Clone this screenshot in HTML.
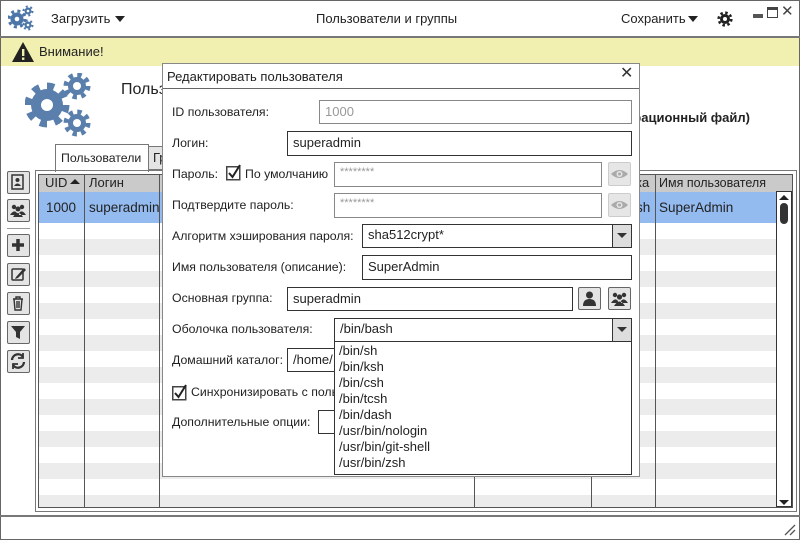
<!DOCTYPE html>
<html><head><meta charset="utf-8">
<style>
*{box-sizing:border-box;margin:0;padding:0}
body{width:800px;height:540px;position:relative;overflow:hidden;background:#fff;font-family:"Liberation Sans","DejaVu Sans",sans-serif;font-size:13px;color:#222}
.a{position:absolute}
.t{position:absolute;white-space:nowrap;line-height:16px}
.l{font-size:12.3px}
.in{position:absolute;border:1.5px solid #333;background:#fff;padding:3px 5px;line-height:16px;white-space:nowrap;overflow:hidden}
.gin{border-color:#888;color:#999}
.btn{position:absolute;width:23px;height:23px;border:1.5px solid #666;background:#e4e4e4;border-radius:2px}
.eye{position:absolute;width:23px;height:24px;border:1px solid #ccc;background:#e6e6e6;border-radius:2px}
.arr{position:absolute;right:0;top:0;bottom:0;width:19px;border-left:1.5px solid #333;background:#ddd}
.arr:after{content:"";position:absolute;left:4px;top:8px;border-left:5px solid transparent;border-right:5px solid transparent;border-top:5px solid #333}
.vl{position:absolute;top:0;width:1px;height:334px;background:#555}
</style></head><body>
<div class="a" style="left:0;top:0;width:800px;height:540px;border:1px solid #666"></div>
<svg class="a" style="left:8px;top:5px" width="26" height="26" viewBox="0 0 26 26">
<g fill="#4d76a8"><circle cx="9" cy="14" r="6.5"/><circle cx="9" cy="14" r="8" fill="none" stroke="#4d76a8" stroke-width="3" stroke-dasharray="3 3.3"/><circle cx="9" cy="14" r="2.3" fill="#fff"/>
<circle cx="20" cy="6" r="3.5"/><circle cx="20" cy="6" r="4.5" fill="none" stroke="#4d76a8" stroke-width="2" stroke-dasharray="2 2.7"/><circle cx="20" cy="6" r="1.3" fill="#fff"/>
<circle cx="20" cy="20" r="3.5"/><circle cx="20" cy="20" r="4.5" fill="none" stroke="#4d76a8" stroke-width="2" stroke-dasharray="2 2.7"/><circle cx="20" cy="20" r="1.3" fill="#fff"/></g></svg>
<div class="t" style="left:51px;top:11px">Загрузить</div>
<div class="a" style="left:115px;top:16px;border-left:5px solid transparent;border-right:5px solid transparent;border-top:6px solid #222"></div>
<div class="t" style="left:316px;top:11px">Пользователи и группы</div>
<div class="t" style="left:621px;top:11px">Сохранить</div>
<div class="a" style="left:688px;top:16px;border-left:5px solid transparent;border-right:5px solid transparent;border-top:6px solid #222"></div>
<svg class="a" style="left:717px;top:11px" width="16" height="16" viewBox="0 0 16 16"><circle cx="8" cy="8" r="5" fill="#222"/><circle cx="8" cy="8" r="6.3" fill="none" stroke="#222" stroke-width="2.6" stroke-dasharray="2.5 2.45"/><circle cx="8" cy="8" r="2" fill="#fff"/></svg>
<div class="a" style="left:753px;top:14px;width:10px;height:4px;background:#555"></div>
<div class="a" style="left:767px;top:7px;width:11px;height:11px;border:1.5px solid #444;border-top-width:3px"></div>
<div class="t" style="left:781px;top:4px;font-size:15px;color:#444">✕</div>
<div class="a" style="left:0;top:36px;width:800px;height:1.5px;background:#777"></div>
<div class="a" style="left:1px;top:38px;width:798px;height:28px;background:#f2f0b0"></div>
<svg class="a" style="left:11px;top:41px" width="24" height="22" viewBox="0 0 24 22"><path d="M12 1 L23 21 L1 21 Z" fill="#222"/><rect x="11" y="8" width="2.4" height="7" fill="#f2f0b0"/><rect x="11" y="16.5" width="2.4" height="2.4" fill="#f2f0b0"/></svg>
<div class="t" style="left:39px;top:44px">Внимание!</div>
<svg class="a" style="left:25px;top:73px" width="70" height="70" viewBox="0 0 70 70">
<g fill="#5a7fad"><circle cx="22" cy="32" r="16"/><circle cx="22" cy="32" r="19" fill="none" stroke="#5a7fad" stroke-width="7" stroke-dasharray="7.2 7.7"/><circle cx="22" cy="32" r="6" fill="#fff"/>
<circle cx="52" cy="13" r="9"/><circle cx="52" cy="13" r="11" fill="none" stroke="#5a7fad" stroke-width="5" stroke-dasharray="4.3 4.33"/><circle cx="52" cy="13" r="4" fill="#fff"/>
<circle cx="52" cy="50" r="9"/><circle cx="52" cy="50" r="11" fill="none" stroke="#5a7fad" stroke-width="5" stroke-dasharray="4.3 4.33"/><circle cx="52" cy="50" r="4" fill="#fff"/></g></svg>
<div class="t" style="left:121px;top:82px;font-size:16px">Пользователи и группы</div>
<div class="t" style="left:121px;top:110px;font-size:13px;font-weight:bold;width:629px;text-align:right">Настройка пользователей (конфигурационный файл)</div>
<div class="a" style="left:55px;top:144px;width:94px;height:28px;border:1px solid #777;border-bottom:none;background:#fff"></div>
<div class="t" style="left:61px;top:150px;font-size:12.3px">Пользователи</div>
<div class="a" style="left:148px;top:146px;width:20px;height:24px;border:1px solid #777;background:#e4e4e4"></div>
<div class="t" style="left:153px;top:150px">Гр</div>
<div class="btn" style="left:7px;top:171px"><svg width="20" height="20" viewBox="0 0 20 20"><rect x="4" y="3" width="11" height="14" fill="none" stroke="#333" stroke-width="1.5"/><circle cx="9.5" cy="8" r="2" fill="#333"/><path d="M6 14 Q9.5 9 13 14Z" fill="#333"/></svg></div>
<div class="btn" style="left:7px;top:199px"><svg width="20" height="20" viewBox="0 0 20 20" fill="#333"><circle cx="6" cy="7" r="2.2"/><circle cx="14" cy="7" r="2.2"/><circle cx="10" cy="9" r="2.5"/><path d="M2 15 Q6 9 9 13 L9 15Z M18 15 Q14 9 11 13 L11 15Z M5 17 Q10 9 15 17Z"/></svg></div>
<div class="a" style="left:7px;top:228px;width:23px;height:1px;background:#999"></div>
<div class="btn" style="left:7px;top:234px"><svg width="20" height="20" viewBox="0 0 20 20"><path d="M10 4v12M4 10h12" stroke="#333" stroke-width="3.5"/></svg></div>
<div class="btn" style="left:7px;top:263px"><svg width="20" height="20" viewBox="0 0 20 20"><rect x="4" y="5" width="11" height="11" rx="1" fill="none" stroke="#333" stroke-width="1.5"/><path d="M8 13 L16 4 L18 6 L10 14 L7 15Z" fill="#333"/></svg></div>
<div class="btn" style="left:7px;top:292px"><svg width="20" height="20" viewBox="0 0 20 20" fill="none" stroke="#333" stroke-width="1.4"><path d="M5 6h10M8 6V4h4v2M6 6l1 11h6l1-11M9 8v7M11 8v7"/></svg></div>
<div class="btn" style="left:7px;top:321px"><svg width="20" height="20" viewBox="0 0 20 20"><path d="M3 4h14l-5 6v7l-4-2v-5Z" fill="#333"/></svg></div>
<div class="btn" style="left:7px;top:350px"><svg width="20" height="20" viewBox="0 0 20 20" fill="none" stroke="#333" stroke-width="2.3"><path d="M4 9a6 6 0 0 1 11-3M16 11a6 6 0 0 1-11 3"/><path d="M15 2v5h-5M5 18v-5h5" stroke-width="1.8"/></svg></div>
<div class="a" style="left:35px;top:170px;width:762px;height:342px;border:1px solid #777"></div>
<div class="a" style="left:38px;top:174px;width:755px;height:334px;border:1px solid #555;overflow:hidden">
 <div class="a" style="left:0;top:0;width:755px;height:17px;background:#cacaca"></div>
 <div class="a" style="left:0;top:17px;width:755px;height:32px;background:#94bbf0"></div>
 <div class="a" style="left:0;top:48px;width:755px;height:290px;background:repeating-linear-gradient(#fff 0,#fff 16px,#ececec 16px,#ececec 32px)"></div>
 <div class="vl" style="left:45px"></div><div class="vl" style="left:120px"></div><div class="vl" style="left:435px"></div><div class="vl" style="left:552px"></div><div class="vl" style="left:616px"></div>
</div>
<div class="t" style="left:45px;top:175px">UID</div>
<div class="a" style="left:70px;top:179px;border-left:5px solid transparent;border-right:5px solid transparent;border-bottom:5px solid #222"></div>
<div class="t" style="left:89px;top:175px">Логин</div>
<div class="t" style="left:46px;top:200px;font-size:13.5px">1000</div>
<div class="t" style="left:89px;top:200px;font-size:13.5px">superadmin</div>
<div class="t" style="left:636px;top:175px">ка</div>
<div class="t" style="left:659px;top:175px;font-size:12.5px">Имя пользователя</div>
<div class="t" style="left:636px;top:200px;font-size:13.5px">sh</div>
<div class="t" style="left:659px;top:200px;font-size:13.5px">SuperAdmin</div>
<div class="a" style="left:776px;top:191px;width:16px;height:316px;border:1.5px solid #333;background:#fff"></div>
<div class="a" style="left:779px;top:195px;border-left:5px solid transparent;border-right:5px solid transparent;border-bottom:5px solid #222"></div>
<div class="a" style="left:780px;top:203px;width:8px;height:21px;border-radius:4px;background:#333"></div>
<div class="a" style="left:779px;top:500px;border-left:5px solid transparent;border-right:5px solid transparent;border-top:5px solid #222"></div>
<div class="a" style="left:0;top:515px;width:800px;height:1.5px;background:#777"></div>
<svg class="a" style="left:784px;top:524px" width="12" height="12"><path d="M1 11L11 1M6 11L11 6" stroke="#555" stroke-width="1.3"/></svg>
<!-- dialog -->
<div class="a" style="left:162px;top:63px;width:478px;height:414px;border:1px solid #888;background:#fff"></div>
<div class="a" style="left:163px;top:88px;width:476px;height:1px;background:#666"></div>
<div class="t" style="left:167px;top:69px">Редактировать пользователя</div>
<div class="t" style="left:620px;top:66px;font-size:16px;color:#333">✕</div>

<div class="t l" style="left:172px;top:104px">ID пользователя:</div>
<div class="in gin" style="left:319px;top:100px;width:313px;height:24px">1000</div>
<div class="t l" style="left:172px;top:135px">Логин:</div>
<div class="in" style="left:287px;top:131px;width:345px;height:25px">superadmin</div>
<div class="t l" style="left:172px;top:166px">Пароль:</div>
<svg class="a" style="left:226px;top:164px" width="16" height="17"><rect x="0.75" y="2.75" width="13" height="13" fill="#fff" stroke="#444" stroke-width="1.5"/><path d="M3 9 L6.5 13 L14 1" fill="none" stroke="#222" stroke-width="2"/></svg>
<div class="t l" style="left:245px;top:166px">По умолчанию</div>
<div class="in gin" style="left:334px;top:162px;width:268px;height:25px;font-size:11px;line-height:12px">********</div>
<div class="eye" style="left:608px;top:162px"><svg width="21" height="22" viewBox="0 0 21 22"><path d="M2 11 Q10.5 3 19 11 Q10.5 19 2 11Z" fill="#aaa"/><circle cx="10.5" cy="11" r="3" fill="#e6e6e6"/><circle cx="10.5" cy="11" r="1.5" fill="#aaa"/></svg></div>
<div class="t l" style="left:172px;top:197px">Подтвердите пароль:</div>
<div class="in gin" style="left:334px;top:193px;width:268px;height:25px;font-size:11px;line-height:12px">********</div>
<div class="eye" style="left:608px;top:193px"><svg width="21" height="22" viewBox="0 0 21 22"><path d="M2 11 Q10.5 3 19 11 Q10.5 19 2 11Z" fill="#aaa"/><circle cx="10.5" cy="11" r="3" fill="#e6e6e6"/><circle cx="10.5" cy="11" r="1.5" fill="#aaa"/></svg></div>
<div class="t l" style="left:172px;top:228px">Алгоритм хэширования пароля:</div>
<div class="in" style="left:362px;top:224px;width:270px;height:24px;padding-top:2px">sha512crypt*<div class="arr"></div></div>
<div class="t l" style="left:172px;top:259px">Имя пользователя (описание):</div>
<div class="in" style="left:362px;top:255px;width:270px;height:25px">SuperAdmin</div>
<div class="t l" style="left:172px;top:290px">Основная группа:</div>
<div class="in" style="left:287px;top:287px;width:286px;height:24px">superadmin</div>
<div class="btn" style="left:578px;top:287px;border-width:1px"><svg width="21" height="21" viewBox="0 0 21 21" fill="#333"><circle cx="10.5" cy="7" r="3.5"/><path d="M4 18 Q4 11 10.5 11 Q17 11 17 18Z"/></svg></div>
<div class="btn" style="left:608px;top:287px;border-width:1px"><svg width="21" height="21" viewBox="0 0 21 21" fill="#333"><circle cx="6" cy="7" r="2.2"/><circle cx="15" cy="7" r="2.2"/><circle cx="10.5" cy="9" r="2.6"/><path d="M2 15 Q6 9 9 13 L9 15Z M19 15 Q15 9 12 13 L12 15Z M5 18 Q10.5 9 16 18Z"/></svg></div>
<div class="t l" style="left:172px;top:321px">Оболочка пользователя:</div>
<div class="in" style="left:334px;top:318px;width:298px;height:24px;padding-top:2px">/bin/bash<div class="arr"></div></div>
<div class="t l" style="left:172px;top:352px">Домашний каталог:</div>
<div class="in" style="left:287px;top:348px;width:60px;height:24px">/home/</div>
<svg class="a" style="left:172px;top:384px" width="16" height="17"><rect x="0.75" y="2.75" width="13" height="13" fill="#fff" stroke="#444" stroke-width="1.5"/><path d="M3 9 L6.5 13 L14 1" fill="none" stroke="#222" stroke-width="2"/></svg>
<div class="t l" style="left:191px;top:384px">Синхронизировать с пользователем</div>
<div class="t l" style="left:172px;top:414px">Дополнительные опции:</div>
<div class="in" style="left:318px;top:410px;width:30px;height:24px"></div>
<div class="a" style="left:334px;top:341px;width:298px;height:134px;border:1.5px solid #333;background:#fff;padding:1px 0 0 4px;line-height:16px">
/bin/sh<br>/bin/ksh<br>/bin/csh<br>/bin/tcsh<br>/bin/dash<br>/usr/bin/nologin<br>/usr/bin/git-shell<br>/usr/bin/zsh</div>
</body></html>
